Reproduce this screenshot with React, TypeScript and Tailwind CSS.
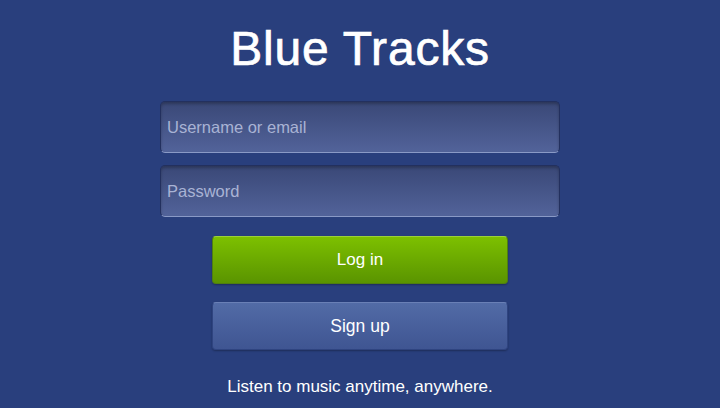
export default function App() {
  return (
    <div className="w-[720px] h-[408px] overflow-hidden bg-[#293f7d] flex flex-col items-center font-['Liberation_Sans',Arial,sans-serif]">
      <h1 className="mt-[22px] h-[54px] text-[48px] leading-[54px] text-white tracking-[0.8px] [-webkit-text-stroke:0.7px_white]">Blue Tracks</h1>

      <div className="mt-[25px] w-[400px] flex flex-col gap-[12px]">
        <input
          placeholder="Username or email"
          className="h-[52px] w-full rounded-[5px] px-[6px] text-[16.5px] text-white placeholder:text-[#a9b3d4] bg-gradient-to-b from-[#3a4877] to-[#52639a] border border-[#23305e] border-b-[#8a9ac6] shadow-[inset_0_2px_3px_rgba(0,0,0,0.25)] outline-none"
        />
        <input
          type="password"
          placeholder="Password"
          className="h-[52px] w-full rounded-[5px] px-[6px] text-[16.5px] text-white placeholder:text-[#a9b3d4] bg-gradient-to-b from-[#3a4877] to-[#52639a] border border-[#23305e] border-b-[#8a9ac6] shadow-[inset_0_2px_3px_rgba(0,0,0,0.25)] outline-none"
        />
      </div>

      <div className="mt-[19px] w-[296px] flex flex-col gap-[18px]">
        <button className="h-[48px] w-full rounded-[4px] text-[17px] text-white bg-gradient-to-b from-[#7dc000] to-[#5a9400] border border-[#4f7f10] border-t-[#9ad23a] shadow-[0_1px_2px_rgba(0,0,0,0.3)]">
          Log in
        </button>
        <button className="h-[48px] w-full rounded-[4px] text-[17.5px] text-white bg-gradient-to-b from-[#526ba6] to-[#3f5592] border border-[#2f4480] border-t-[#6a80b6] shadow-[0_1px_2px_rgba(0,0,0,0.3)]">
          Sign up
        </button>
      </div>

      <p className="mt-[24px] text-[17px] text-white">Listen to music anytime, anywhere.</p>
    </div>
  );
}
